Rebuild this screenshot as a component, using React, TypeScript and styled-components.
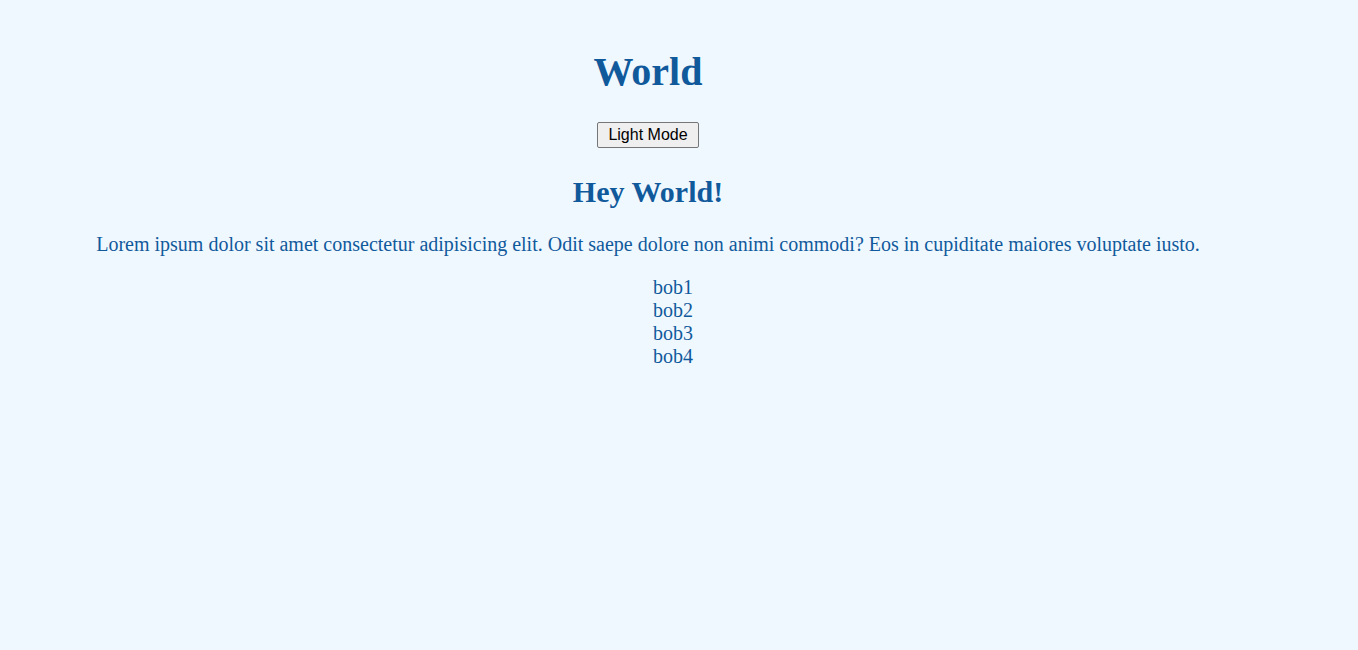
import React, { useState } from "react";
import styled, { createGlobalStyle } from "styled-components";

const GlobalStyle = createGlobalStyle`
  html, body {
    background: #f0f8ff;
  }
  body {
    margin: 8px;
    font-family: "Liberation Serif", "Times New Roman", serif;
  }
`;

const Main = styled.main`
  max-width: 1280px;
  padding-top: 13px;
  text-align: center;
  color: #105a9c;
  font-size: 20px;
`;

const Title = styled.h1`
  font-size: 2em;
  margin: 0.67em 0;
`;

const ModeButton = styled.button`
  font-family: "Liberation Sans", Arial, sans-serif;
  font-size: 16px;
  color: #000;
  background: #efefef;
  border: 1px solid #767676;
  border-radius: 2px;
  padding: 3px 10px;
`;

const Subtitle = styled.h2`
  font-size: 1.5em;
  margin: 27px 0 0.83em;
`;

const Text = styled.p`
  margin: 1em 0;
`;

const List = styled.ul`
  list-style: none;
  margin: 1em 0;
  padding-left: 50px;
`;

const Item = styled.li``;

export default function App() {
  const [light, setLight] = useState(true);
  return (
    <>
      <GlobalStyle />
      <Main>
        <Title>World</Title>
        <ModeButton onClick={() => setLight(!light)}>Light Mode</ModeButton>
        <Subtitle>Hey World!</Subtitle>
        <Text>
          Lorem ipsum dolor sit amet consectetur adipisicing elit. Odit saepe dolore non animi commodi? Eos in cupiditate
          maiores voluptate iusto.
        </Text>
        <List>
          {["bob1", "bob2", "bob3", "bob4"].map((b) => (
            <Item key={b}>{b}</Item>
          ))}
        </List>
      </Main>
    </>
  );
}
